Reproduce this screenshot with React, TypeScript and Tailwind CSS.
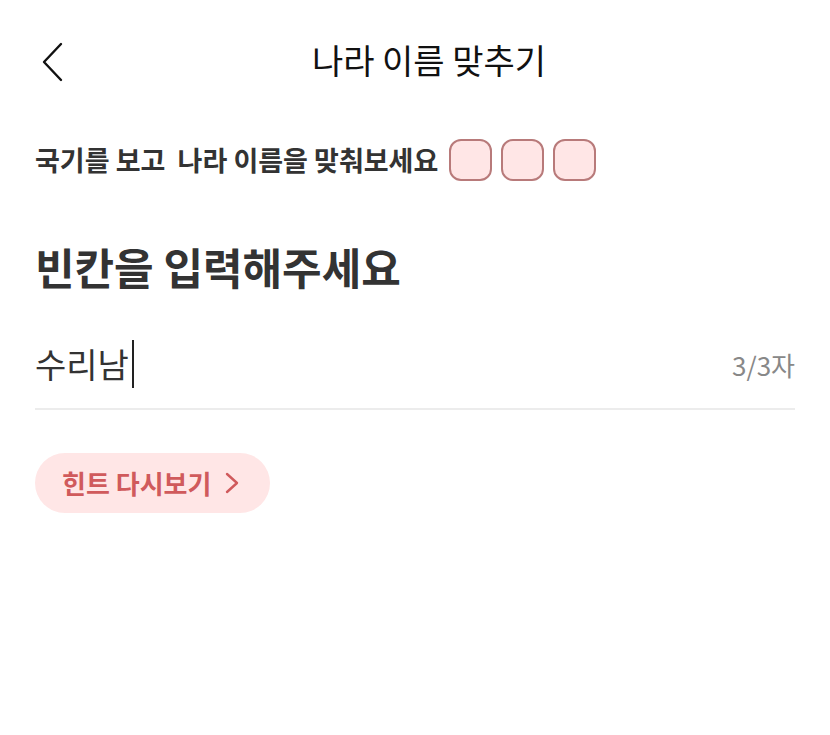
import React from "react";

export default function App() {
  const font = { fontFamily: '"Noto Sans CJK KR", "Noto Sans", sans-serif' };
  return (
    <div className="w-[830px] h-[735px] bg-white text-[#333]" style={font}>
      <div className="relative h-[124px] flex items-start pt-[38px] pl-[28px] justify-center">
        <svg className="absolute left-[40px] top-[42px]" width="24" height="40" viewBox="0 0 24 40" fill="none">
          <path d="M21 2 L4 20 L21 38" stroke="#111" strokeWidth="2.4" strokeLinecap="round" strokeLinejoin="round" />
        </svg>
        <div className="text-[34px] leading-[44px] text-[#111] font-normal">나라 이름 맞추기</div>
      </div>
      <div className="px-[35px]">
        <div className="flex items-center h-[46px] mt-[13px]">
          <span className="text-[27px] font-bold leading-[40px] text-[#333] whitespace-pre">국기를 보고  나라 이름을 맞춰보세요</span>
          <div className="flex gap-[9px] ml-[11px]">
            <div className="w-[43px] h-[42px] rounded-[12px] border-2 border-[#b87a7a] bg-[#ffe6e6]" />
            <div className="w-[43px] h-[42px] rounded-[12px] border-2 border-[#b87a7a] bg-[#ffe6e6]" />
            <div className="w-[43px] h-[42px] rounded-[12px] border-2 border-[#b87a7a] bg-[#ffe6e6]" />
          </div>
        </div>
        <div className="mt-[57px] text-[43px] font-bold leading-[52px] text-[#333]">빈칸을 입력해주세요</div>
        <div className="mt-[45px] flex items-center justify-between h-[54px]">
          <div className="flex items-center">
            <span className="text-[34px] text-[#333] leading-[44px]">수리남</span>
            <span className="ml-[3px] w-[2px] h-[48px] bg-[#222]" />
          </div>
          <span className="text-[26px] text-[#888]">3/3자</span>
        </div>
        <div className="mt-[17px] h-[2px] bg-[#ececec]" />
        <button className="mt-[43px] h-[60px] w-[235px] rounded-full bg-[#ffe6e6] flex items-center pl-[27px] gap-[13px]">
          <span className="text-[26px] font-bold leading-[36px] text-[#d05a5c]">힌트 다시보기</span>
          <svg width="16" height="24" viewBox="0 0 16 24" fill="none">
            <path d="M3 3 L13 12 L3 21" stroke="#d05a5c" strokeWidth="2.4" strokeLinecap="round" strokeLinejoin="round" />
          </svg>
        </button>
      </div>
    </div>
  );
}
